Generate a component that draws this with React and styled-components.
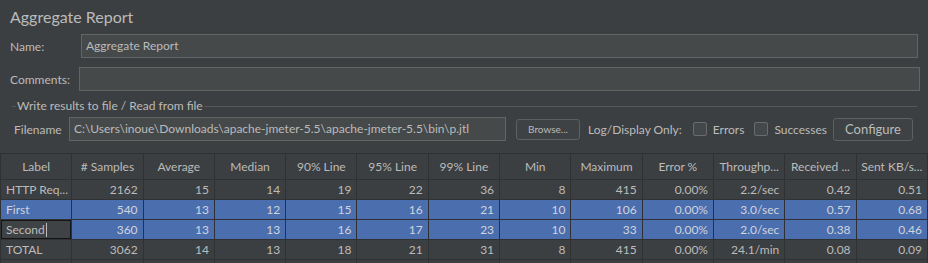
import React from "react";
import styled, { createGlobalStyle } from "styled-components";

const GlobalStyle = createGlobalStyle`
  html, body {
    margin: 0;
    padding: 0;
    background: #3c3f41;
  }
  body {
    width: 928px;
    height: 263px;
    overflow: hidden;
    font-family: Lato, "Liberation Sans", sans-serif;
    color: #bbbbbb;
  }
`;

const columns = [
  "Label",
  "# Samples",
  "Average",
  "Median",
  "90% Line",
  "95% Line",
  "99% Line",
  "Min",
  "Maximum",
  "Error %",
  "Throughp...",
  "Received ...",
  "Sent KB/s...",
];

const rows = [
  { cells: ["HTTP Req...", "2162", "15", "14", "19", "22", "36", "8", "415", "0.00%", "2.2/sec", "0.42", "0.51"] },
  { cells: ["First", "540", "13", "12", "15", "16", "21", "10", "106", "0.00%", "3.0/sec", "0.57", "0.68"], selected: true },
  { cells: ["Second", "360", "13", "13", "16", "17", "23", "10", "33", "0.00%", "2.0/sec", "0.38", "0.46"], selected: true, editing: true },
  { cells: ["TOTAL", "3062", "14", "13", "18", "21", "31", "8", "415", "0.00%", "24.1/min", "0.08", "0.09"] },
];

const App = () => {
  return (
    <Panel>
      <GlobalStyle />
      <Title>Aggregate Report</Title>

      <FieldRow $pr={10}>
        <FieldLabel $w={71}>Name:</FieldLabel>
        <TextBox>Aggregate Report</TextBox>
      </FieldRow>

      <FieldRow $pr={8} $mt={9}>
        <FieldLabel $w={69}>Comments:</FieldLabel>
        <TextBox />
      </FieldRow>

      <GroupTitle>Write results to file / Read from file</GroupTitle>

      <FileRow>
        <FieldLabel $w={55}>Filename</FieldLabel>
        <TextBox>C:\Users\inoue\Downloads\apache-jmeter-5.5\apache-jmeter-5.5\bin\p.jtl</TextBox>
        <Button $small>Browse...</Button>
        <span className="log">Log/Display Only:</span>
        <Check>
          <Box />
          Errors
        </Check>
        <Check>
          <Box />
          Successes
        </Check>
        <Button>Configure</Button>
      </FileRow>

      <Table>
        <thead>
          <tr>
            {columns.map((c) => (
              <Th key={c}>{c}</Th>
            ))}
          </tr>
        </thead>
        <tbody>
          {rows.map((r, i) => (
            <tr key={i}>
              {r.cells.map((c, j) => (
                <Td
                  key={j}
                  $first={j === 0}
                  $selected={r.selected && !(r.editing && j === 0)}
                  $editing={r.editing && j === 0}
                >
                  {c}
                  {r.editing && j === 0 && <Caret />}
                </Td>
              ))}
            </tr>
          ))}
          <tr>
            {columns.map((c) => (
              <Td key={c} />
            ))}
          </tr>
        </tbody>
      </Table>
    </Panel>
  );
};

export default App;

const Panel = styled.div`
  width: 928px;
  height: 263px;
  overflow: hidden;
  font-size: 12px;
`;

const Title = styled.div`
  padding: 5px 10px 5px;
  line-height: 24px;
  font-size: 16px;
`;

const FieldRow = styled.div`
  display: flex;
  align-items: center;
  padding: 0 ${(p) => p.$pr}px 0 10px;
  margin-top: ${(p) => p.$mt || 0}px;
`;

const FieldLabel = styled.span`
  width: ${(p) => p.$w}px;
  flex: none;
  white-space: nowrap;
`;

const TextBox = styled.div`
  flex: 1;
  min-width: 0;
  height: 22px;
  line-height: 22px;
  background: #45494a;
  border: 1px solid #646464;
  padding: 0 4px;
  white-space: nowrap;
  overflow: hidden;
`;

const GroupTitle = styled.div`
  display: flex;
  align-items: center;
  gap: 1px;
  margin: 7px 11px 0 12px;
  line-height: 16px;

  &::before,
  &::after {
    content: "";
    height: 1px;
    background: #555759;
  }
  &::before {
    width: 4px;
  }
  &::after {
    flex: 1;
  }
`;

const FileRow = styled.div`
  display: flex;
  align-items: center;
  margin-top: 3px;
  padding: 0 15px 0 14px;
  height: 24px;

  .log {
    margin: 0 11px 0 8px;
    white-space: nowrap;
  }
`;

const Button = styled.div`
  flex: none;
  display: flex;
  align-items: center;
  justify-content: center;
  box-sizing: border-box;
  width: ${(p) => (p.$small ? 64 : 80)}px;
  height: ${(p) => (p.$small ? 21 : 23)}px;
  margin-left: ${(p) => (p.$small ? 10 : 0)}px;
  border: 1px solid #5e6060;
  border-radius: 3px;
  background: #3e4244;
  font-size: ${(p) => (p.$small ? 10 : 13)}px;
`;

const Check = styled.label`
  display: flex;
  align-items: center;
  gap: 6px;
  margin-right: 6px;
  white-space: nowrap;
  & + & {
    margin-left: 4px;
  }
`;

const Box = styled.span`
  width: 12px;
  height: 12px;
  border: 1px solid #6b6b6b;
  border-radius: 2px;
  background: #43494a;
`;

const Table = styled.table`
  margin-top: 12px;
  width: 928px;
  table-layout: fixed;
  border-collapse: collapse;
  border-top: 1px solid #2f3133;
`;

const Th = styled.th`
  height: 25px;
  padding: 0 4px;
  font-weight: normal;
  text-align: center;
  white-space: nowrap;
  overflow: hidden;
  border: 1px solid #2f3133;
  border-top: none;
`;

const Td = styled.td`
  height: 19px;
  padding: 0 5px;
  text-align: ${(p) => (p.$first ? "left" : "right")};
  white-space: nowrap;
  overflow: hidden;
  border: 1px solid #2f3133;
  background: ${(p) => (p.$selected ? "#4b6eaf" : p.$editing ? "#404345" : "transparent")};
  box-shadow: ${(p) => (p.$editing ? "inset 0 0 0 1px #151515" : "none")};
  color: ${(p) => (p.$selected ? "#d0d4dc" : "#bbbbbb")};
`;

const Caret = styled.span`
  display: inline-block;
  width: 1px;
  height: 14px;
  margin-left: 1px;
  vertical-align: middle;
  background: #bbbbbb;
`;
